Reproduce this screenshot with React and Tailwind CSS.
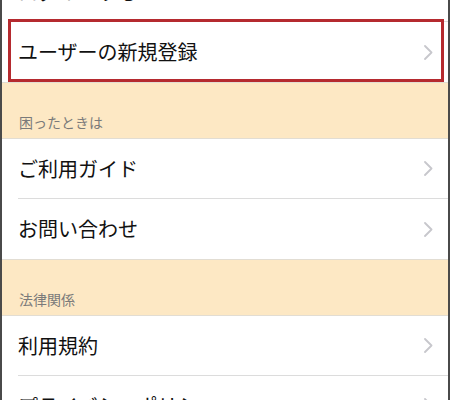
const font = { fontFamily: '"Noto Sans CJK JP", "Noto Sans", sans-serif' };

function Chevron() {
  return (
    <svg width="9" height="15" viewBox="0 0 9 15" fill="none">
      <path d="M1 1L7.5 7.5L1 14" stroke="#c7c7cc" strokeWidth="1.8" strokeLinecap="round" strokeLinejoin="round" />
    </svg>
  );
}

function Row({ label, last }) {
  return (
    <div className="bg-white pl-[16px]">
      <div
        className={`flex h-[60px] items-center justify-between pr-[15px] ${
          last ? "" : "border-b border-[#dcdcdc]"
        }`}
      >
        <span className="text-[20px] leading-none text-[#111]">{label}</span>
        <Chevron />
      </div>
    </div>
  );
}

function Header({ label }) {
  return (
    <div className="flex h-[57px] items-end border-y border-[#e2ddd3] bg-[#fde8c4] pb-[6px] pl-[17px]">
      <span className="text-[14px] leading-5 text-[#7a7a7a]">{label}</span>
    </div>
  );
}

export default function App() {
  return (
    <div
      className="relative h-[400px] w-[450px] overflow-hidden border-x-2 border-[#4a4a4a] bg-white"
      style={font}
    >
      <div className="mt-[-38px] flex flex-col">
        <Row label="ログインする" />
        <Row label="ユーザーの新規登録" last />
        <Header label="困ったときは" />
        <Row label="ご利用ガイド" />
        <Row label="お問い合わせ" last />
        <Header label="法律関係" />
        <Row label="利用規約" />
        <Row label="プライバシーポリシー" />
      </div>

      {/* highlight box */}
      <div className="absolute left-[6px] top-[19px] h-[63px] w-[436px] border-[3px] border-[#b52a2f]" />
    </div>
  );
}
